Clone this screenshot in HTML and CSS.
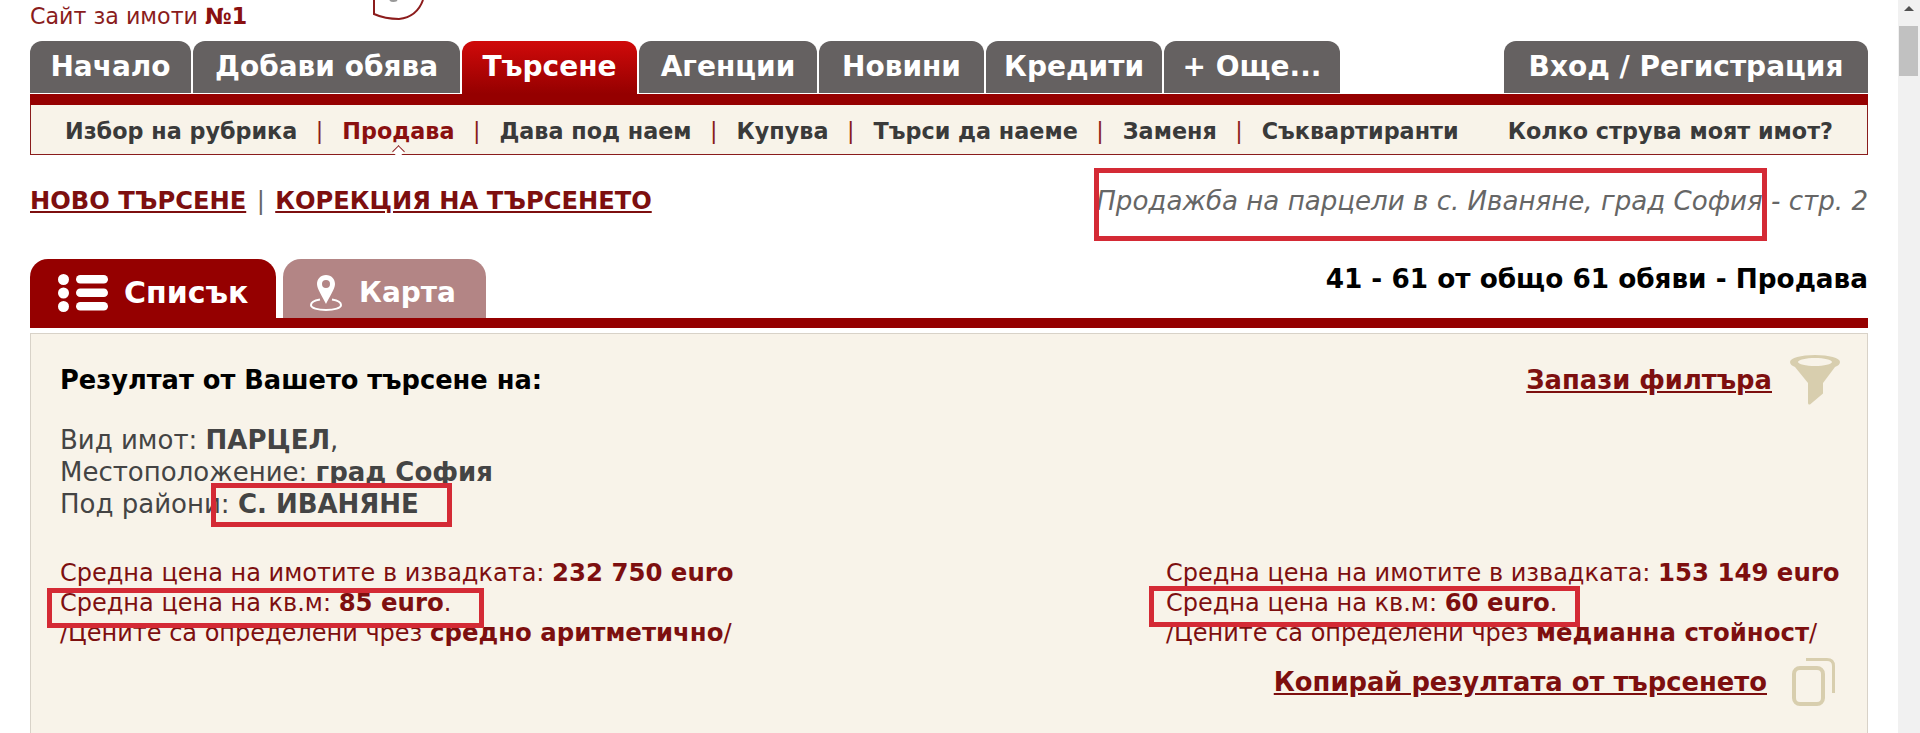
FILE: index.html
```html
<!DOCTYPE html>
<html lang="bg">
<head>
    <meta charset="UTF-8">
    <meta name="viewport" content="width=device-width, initial-scale=1.0">
    <title>Продажба на парцели в с. Иваняне, град София</title>
    <link rel="stylesheet" href="styles.css">
</head>
<body>
<div class="window">
    <div class="page">
        <header class="top">
            <div class="slogan">Сайт за имоти <b>№1</b></div>
            <svg class="logo" width="56" height="22" viewBox="0 0 56 22">
                <path d="M3 0V14Q14 19 28 19Q46 17 52 0" fill="none" stroke="#8c1c1c" stroke-width="2"/>
                <path d="M19 0Q22 2 26 0" fill="none" stroke="#999" stroke-width="2"/>
            </svg>
        </header>

        <nav class="tabs">
            <a class="tab tab-home">Начало</a>
            <a class="tab tab-add">Добави обява</a>
            <a class="tab tab-search active">Търсене</a>
            <a class="tab tab-agencies">Агенции</a>
            <a class="tab tab-news">Новини</a>
            <a class="tab tab-credit">Кредити</a>
            <a class="tab tab-more">+ Още...</a>
            <a class="tab tab-login">Вход / Регистрация</a>
        </nav>
        <div class="nav-bar"></div>
        <div class="subnav">
            <a>Избор на рубрика</a><span class="sep">|</span>
            <a class="current">Продава</a><span class="sep">|</span>
            <a>Дава под наем</a><span class="sep">|</span>
            <a>Купува</a><span class="sep">|</span>
            <a>Търси да наеме</a><span class="sep">|</span>
            <a>Заменя</a><span class="sep">|</span>
            <a>Съквартиранти</a>
            <a class="sub-last">Колко струва моят имот?</a>
        </div>

        <div class="search-row">
            <div class="search-links">
                <a>НОВО ТЪРСЕНЕ</a> <span class="pipe">|</span> <a>КОРЕКЦИЯ НА ТЪРСЕНЕТО</a>
            </div>
            <div class="search-title">Продажба на парцели в с. Иваняне, град София - стр. 2</div>
        </div>

        <div class="view-row">
            <a class="view-tab view-on">
                <svg width="50" height="38" viewBox="0 0 50 38" fill="#fff">
                    <circle cx="5.500" cy="5.500" r="5.500"/>
                    <circle cx="5.500" cy="19" r="5.500"/>
                    <circle cx="5.500" cy="32.500" r="5.500"/>
                    <rect x="18" y="1" width="32" height="8.500" rx="4.250"/>
                    <rect x="18" y="14.500" width="32" height="8.500" rx="4.250"/>
                    <rect x="18" y="28" width="32" height="8.500" rx="4.250"/>
                </svg>
                Списък
            </a>
            <a class="view-tab view-off">
                <svg width="32" height="36" viewBox="0 0 32 36">
                    <path fill-rule="evenodd" fill="#fff" d="M16 0C10.500 0 7 4 7 9C7 14 12.500 21.500 16 29C19.500 21.500 25 14 25 9C25 4 21.500 0 16 0ZM16 5A4 4 0 1 1 16 13A4 4 0 0 1 16 5Z"/>
                    <path fill="none" stroke="#fff" stroke-width="2" d="M10 24.500C4.500 25.500 1 27.500 1 30C1 33 7.500 35 16 35C24.500 35 31 33 31 30C31 27.500 27.500 25.500 22 24.500"/>
                </svg>
                Карта
            </a>
            <div class="count">41 - 61 от общо 61 обяви - Продава</div>
        </div>
        <div class="view-bar"></div>

        <section class="panel">
            <div class="panel-head">
                <h2>Резултат от Вашето търсене на:</h2>
                <a class="panel-link">Запази филтъра</a>
                <svg class="funnel" width="50" height="50" viewBox="0 0 50 50">
                    <path fill="#d8ceae" fill-rule="evenodd" d="M0 7C0 3 11 0 25 0S50 3 50 7C50 9 48 11 45 12L33 28V38.500L20 49.500Q18 50 18 48V28L5 12C2 11 0 9 0 7ZM8 7C8 9 16 11 25 11S42 9 42 7S34 3 25 3S8 5 8 7Z"/>
                </svg>
            </div>

            <div class="criteria">
                <div>Вид имот: <b>ПАРЦЕЛ</b>,</div>
                <div>Местоположение: <b>град София</b></div>
                <div>Под райони: <b>С. ИВАНЯНЕ</b></div>
            </div>

            <div class="prices">
                <div>
                    <div>Средна цена на имотите в извадката: <b>232 750 euro</b></div>
                    <div>Средна цена на кв.м: <b>85 euro</b>.</div>
                    <div>/Цените са определени чрез <b>средно аритметично</b>/</div>
                </div>
                <div>
                    <div>Средна цена на имотите в извадката: <b>153 149 euro</b></div>
                    <div>Средна цена на кв.м: <b>60 euro</b>.</div>
                    <div>/Цените са определени чрез <b>медианна стойност</b>/</div>
                </div>
            </div>

            <div class="panel-foot">
                <a class="panel-link">Копирай резултата от търсенето</a>
                <svg class="copy" width="43" height="48" viewBox="0 0 43 48" fill="none" stroke="#d8ceae">
                    <rect x="2" y="10" width="29" height="36" rx="6" stroke-width="4"/>
                    <path d="M14 1.500H35Q41.500 1.500 41.500 8V35" stroke-width="3"/>
                </svg>
            </div>
        </section>

        <!-- red frames drawn on top of the screenshot -->
        <i class="mark mark-title"></i>
        <i class="mark mark-area"></i>
        <i class="mark mark-left"></i>
        <i class="mark mark-right"></i>
    </div>

    <aside class="scrollbar">
        <span class="scroll-up"></span>
        <span class="scroll-thumb"></span>
    </aside>
</div>
</body>
</html>
```

FILE: styles.css
```css
html, body {
    margin: 0;
    height: 100%;
    overflow: hidden;
    background: #fff;
}
body {
    font-family: "DejaVu Sans", Verdana, sans-serif;
    font-size: 24px;
    color: #444;
}
.window {
    display: flex;
    height: 733px;
    overflow: hidden;
}
.page {
    position: relative;
    width: 1838px;
    padding: 0 30px;
    flex-shrink: 0;
}

/* header */
.top {
    position: relative;
    height: 41px;
    overflow: hidden;
}
.slogan {
    font-size: 22.200px;
    line-height: 32px;
    color: #8a1c1c;
}
.slogan b {
    color: #8a1010;
}
.logo {
    position: absolute;
    left: 341px;
    top: 0;
}

/* main nav */
.tabs {
    display: flex;
    height: 52px;
}
.tab {
    display: flex;
    align-items: center;
    justify-content: center;
    padding-bottom: 2px;
    margin-right: 2px;
    background: #656161;
    color: #fff;
    font-size: 28px;
    font-weight: bold;
    border-radius: 12px 12px 0 0;
    box-sizing: border-box;
    white-space: nowrap;
}
.tab.active {
    background: linear-gradient(#d00a0a, #950000);
    height: 53px;
    padding-bottom: 3px;
}
.tab-home { width: 161px; }
.tab-add { width: 267px; }
.tab-search { width: 175px; }
.tab-agencies { width: 178px; }
.tab-news { width: 165px; }
.tab-credit { width: 176px; }
.tab-more { width: 176px; margin-right: 0; }
.tab-login { width: 364px; margin-left: auto; margin-right: 0; }
.nav-bar {
    height: 11px;
    margin-top: 1px;
    background: #950000;
}
.subnav {
    display: flex;
    align-items: center;
    height: 50px;
    padding: 3px 34px 0;
    background: #f8f3e9;
    border: 1px solid #8a1c1c;
    border-top: 0;
    box-sizing: border-box;
    font-size: 22.300px;
    font-weight: bold;
    color: #3a3a3a;
    white-space: nowrap;
}
.subnav .sep {
    margin: 0 19px 0 18.500px;
    font-weight: normal;
    color: #8a1c1c;
}
.subnav .current {
    position: relative;
    color: #8a1010;
}
.subnav .current::after {
    content: "";
    position: absolute;
    left: 50%;
    bottom: -12px;
    width: 8px;
    height: 8px;
    margin-left: -4px;
    background: #fff;
    border-left: 1px solid #8a1c1c;
    border-top: 1px solid #8a1c1c;
    transform: rotate(45deg);
}
.sub-last {
    margin-left: auto;
}

/* search links and title */
.search-row {
    display: flex;
    justify-content: space-between;
    align-items: center;
    height: 34px;
    margin-top: 29px;
}
.search-links {
    font-size: 24.200px;
    font-weight: bold;
}
.search-links a {
    color: #7d0f0f;
    text-decoration: underline;
}
.search-links .pipe {
    margin: 0 2px;
    font-weight: normal;
    color: #666;
}
.search-title {
    font-style: italic;
    font-size: 26.100px;
    color: #666;
}

/* list / map switch */
.view-row {
    display: flex;
    align-items: flex-end;
    height: 59px;
    margin-top: 41px;
}
.view-tab {
    display: flex;
    align-items: center;
    height: 59px;
    padding-top: 8px;
    margin-right: 7px;
    color: #fff;
    font-weight: bold;
    border-radius: 18px 18px 0 0;
    box-sizing: border-box;
}
.view-on {
    width: 246px;
    padding-left: 28px;
    gap: 16px;
    background: #950000;
    font-size: 30px;
}
.view-off {
    width: 203px;
    padding-left: 27px;
    gap: 17px;
    background: #b38585;
    font-size: 28px;
}
.count {
    align-self: flex-start;
    margin-left: auto;
    font-size: 26.300px;
    font-weight: bold;
    color: #000;
    line-height: 41px;
}
.view-bar {
    height: 10px;
    background: #950000;
}

/* result panel */
.panel {
    margin-top: 5px;
    height: 420px;
    padding: 21px 27px 0 29px;
    background: #f8f3e9;
    border: 1px solid #d8d2c8;
    box-sizing: border-box;
}
.panel-head, .panel-foot {
    display: flex;
    align-items: center;
}
.panel-head {
    height: 50px;
}
.panel-head h2 {
    margin: 0 auto 0 0;
    font-size: 25.700px;
    color: #000;
}
.panel-link {
    font-size: 25.800px;
    font-weight: bold;
    color: #7d0f0f;
    text-decoration: underline;
}
.funnel {
    margin-left: 18px;
}
.copy {
    margin: 0 5px 0 25px;
}
.criteria {
    margin-top: 19px;
    font-size: 26px;
    line-height: 32px;
}
.prices {
    display: flex;
    justify-content: space-between;
    margin-top: 38px;
    font-size: 24px;
    line-height: 30px;
    color: #7d0f0f;
}
.prices b {
    font-size: 24.400px;
}
.prices > div {
    white-space: nowrap;
}
.prices > div:last-child {
    width: 674px;
}
.panel-foot {
    justify-content: flex-end;
    margin-top: 10px;
}

/* annotation frames */
.mark {
    position: absolute;
    border: 5px solid #d42a35;
    box-sizing: border-box;
}
.mark-title { left: 1094px; top: 168px; width: 673px; height: 73px; }
.mark-area { left: 211px; top: 483px; width: 241px; height: 44px; }
.mark-left { left: 47px; top: 588px; width: 437px; height: 40px; }
.mark-right { left: 1149px; top: 586px; width: 431px; height: 41px; }

/* scrollbar */
.scrollbar {
    position: relative;
    width: 22px;
    background: #f1f1f1;
    flex-shrink: 0;
}
.scroll-up {
    position: absolute;
    left: 6px;
    top: 6px;
    border-left: 5px solid transparent;
    border-right: 5px solid transparent;
    border-bottom: 5px solid #505050;
}
.scroll-thumb {
    position: absolute;
    left: 1px;
    top: 26px;
    width: 19px;
    height: 50px;
    background: #c1c1c1;
}
```
